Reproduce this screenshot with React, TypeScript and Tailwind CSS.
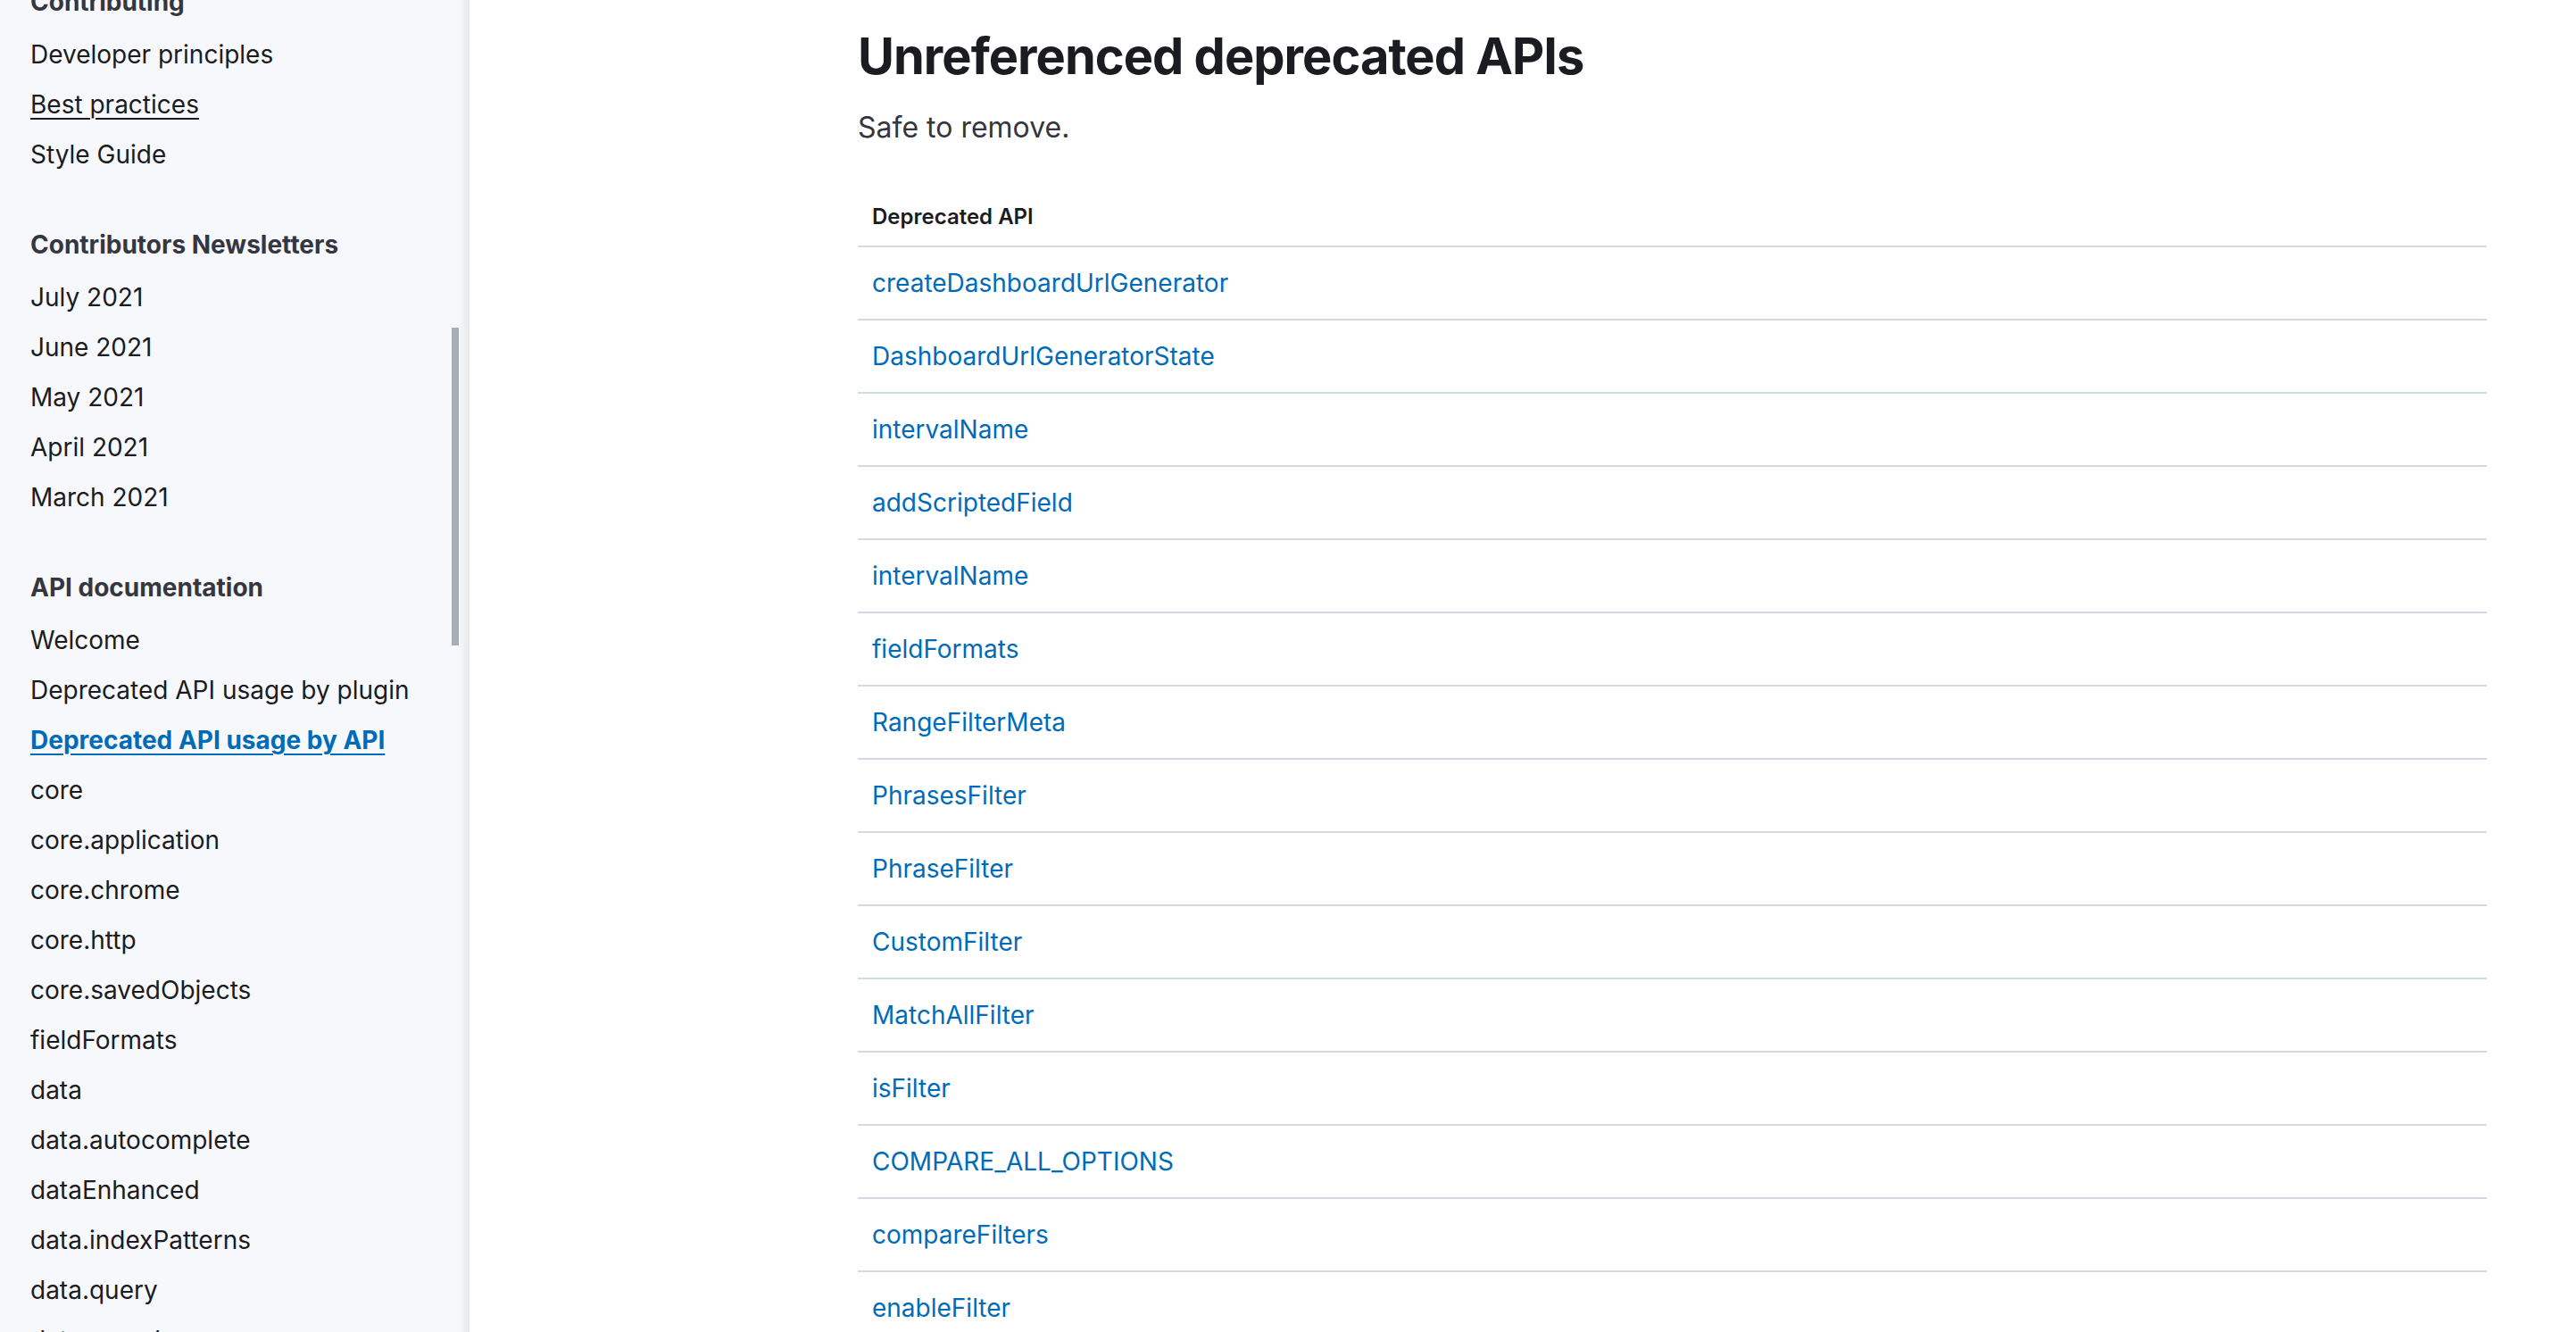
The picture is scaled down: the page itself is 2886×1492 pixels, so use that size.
import React from 'react';

const sections = [
  {
    title: 'Contributing',
    items: ['Developer principles', 'Best practices', 'Style Guide'],
  },
  {
    title: 'Contributors Newsletters',
    items: ['July 2021', 'June 2021', 'May 2021', 'April 2021', 'March 2021'],
  },
  {
    title: 'API documentation',
    items: [
      'Welcome',
      'Deprecated API usage by plugin',
      'Deprecated API usage by API',
      'core',
      'core.application',
      'core.chrome',
      'core.http',
      'core.savedObjects',
      'fieldFormats',
      'data',
      'data.autocomplete',
      'dataEnhanced',
      'data.indexPatterns',
      'data.query',
      'data.search',
    ],
  },
];

const apis = [
  'createDashboardUrlGenerator',
  'DashboardUrlGeneratorState',
  'intervalName',
  'addScriptedField',
  'intervalName',
  'fieldFormats',
  'RangeFilterMeta',
  'PhrasesFilter',
  'PhraseFilter',
  'CustomFilter',
  'MatchAllFilter',
  'isFilter',
  'COMPARE_ALL_OPTIONS',
  'compareFilters',
  'enableFilter',
  'disableFilter',
];

const NavItem = ({ label }: { label: string }) => {
  if (label === 'Deprecated API usage by API') {
    return (
      <a href="#" className="block h-[56px] leading-[56px] font-bold text-[#006bb8] underline decoration-2 underline-offset-[5px]">
        {label}
      </a>
    );
  }
  if (label === 'Best practices') {
    return (
      <a href="#" className="block h-[56px] leading-[56px] text-[#1a1c21] underline decoration-2 underline-offset-[5px]">
        {label}
      </a>
    );
  }
  return <a href="#" className="block h-[56px] leading-[56px] text-[#1a1c21]">{label}</a>;
};

export default function App() {
  return (
    <div className="flex h-screen overflow-hidden bg-white font-['Inter',sans-serif]">
      <aside className="relative w-[526px] shrink-0 overflow-hidden bg-[#f7f8fc]">
        <nav className="-mt-[26px] pl-[34px] text-[28px]">
          {sections.map((s, i) => (
            <div key={s.title} className={i > 0 ? 'mt-[45px]' : ''}>
              <h3 className="mb-[3px] h-[56px] leading-[56px] font-bold text-[#343741]">{s.title}</h3>
              {s.items.map((it) => (
                <NavItem key={it} label={it} />
              ))}
            </div>
          ))}
        </nav>
        {/* scrollbar thumb */}
        <div className="absolute left-[506px] top-[367px] h-[356px] w-[8px] bg-[#a9aeb5]" />
        {/* edge shadow */}
        <div className="absolute right-0 top-0 h-full w-[12px] bg-gradient-to-r from-transparent to-[#e8e9ec]" />
      </aside>

      <main className="flex-1 pl-[435px] pr-[100px]">
        <h1 className="mt-[31px] text-[56px] leading-[64px] font-bold tracking-[-1px] text-[#1a1c21]">
          Unreferenced deprecated APIs
        </h1>
        <p className="mt-[24px] text-[32px] leading-[48px] text-[#343741]">Safe to remove.</p>

        <table className="mt-[43px] w-[1825px] border-collapse text-left">
          <thead>
            <tr className="border-b-2 border-[#d3dae6]">
              <th className="h-[66px] px-[16px] text-[24px] font-semibold text-[#1a1c21]">Deprecated API</th>
            </tr>
          </thead>
          <tbody>
            {apis.map((a, i) => (
              <tr key={i} className="border-b-2 border-[#d3dae6]">
                <td className="h-[82px] px-[16px] text-[28px]">
                  <a href="#" className="text-[#006bb8]">{a}</a>
                </td>
              </tr>
            ))}
          </tbody>
        </table>
      </main>
    </div>
  );
}
